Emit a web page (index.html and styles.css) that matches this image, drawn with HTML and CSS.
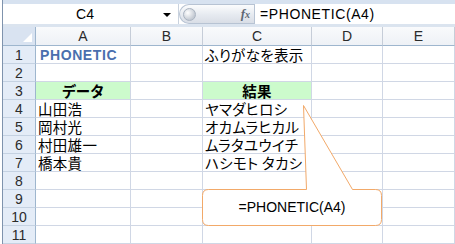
FILE: index.html
```html
<!DOCTYPE html>
<html lang="ja">
<head>
<meta charset="utf-8">
<title>PHONETIC</title>
<link rel="stylesheet" href="styles.css">
</head>
<body>
<div class="app">
  <div class="topstrip"></div>
  <div class="fbar">
    <div class="namebox"><span class="ref">C4</span><span class="dd"></span></div>
    <div class="pill"><span class="knob"></span><span class="fx">f<span class="fxx">x</span></span></div>
    <div class="formula">=PHONETIC(A4)</div>
  </div>
  <div class="band"></div>
  <div class="sheet">
    <div class="corner"><span class="tri"></span></div>
    <div class="colh">A</div><div class="colh">B</div><div class="colh">C</div><div class="colh">D</div><div class="colh">E</div>

    <div class="rowh">1</div><div class="cell title">PHONETIC</div><div class="cell"></div><div class="cell jp">ふりがなを表示</div><div class="cell"></div><div class="cell"></div>
    <div class="rowh">2</div><div class="cell"></div><div class="cell"></div><div class="cell"></div><div class="cell"></div><div class="cell"></div>
    <div class="rowh">3</div><div class="cell jp head">データ</div><div class="cell"></div><div class="cell jp head">結果</div><div class="cell"></div><div class="cell"></div>
    <div class="rowh">4</div><div class="cell jp">山田浩</div><div class="cell"></div><div class="cell jp">ヤマダヒロシ</div><div class="cell"></div><div class="cell"></div>
    <div class="rowh">5</div><div class="cell jp">岡村光</div><div class="cell"></div><div class="cell jp">オカムラヒカル</div><div class="cell"></div><div class="cell"></div>
    <div class="rowh">6</div><div class="cell jp">村田雄一</div><div class="cell"></div><div class="cell jp">ムラタユウイチ</div><div class="cell"></div><div class="cell"></div>
    <div class="rowh">7</div><div class="cell jp">橋本貴</div><div class="cell"></div><div class="cell jp">ハシモト タカシ</div><div class="cell"></div><div class="cell"></div>
    <div class="rowh">8</div><div class="cell"></div><div class="cell"></div><div class="cell"></div><div class="cell"></div><div class="cell"></div>
    <div class="rowh">9</div><div class="cell"></div><div class="cell"></div><div class="cell"></div><div class="cell"></div><div class="cell"></div>
    <div class="rowh">10</div><div class="cell"></div><div class="cell"></div><div class="cell"></div><div class="cell"></div><div class="cell"></div>
    <div class="rowh">11</div><div class="cell"></div><div class="cell"></div><div class="cell"></div><div class="cell"></div><div class="cell"></div>
  </div>
  <div class="callout">
    <svg width="455" height="244" viewBox="0 0 455 244">
      <path d="M208.5 189.5 H306.5 L303.5 105.5 L352.5 189.5 H375.5 Q381.5 189.5 381.5 195.5 V219.5 Q381.5 225.5 375.5 225.5 H208.5 Q202.5 225.5 202.5 219.5 V195.5 Q202.5 189.5 208.5 189.5 Z" fill="#ffffff" stroke="#f2a969" stroke-width="1"/>
    </svg>
    <div class="callout-text">=PHONETIC(A4)</div>
  </div>
</div>
</body>
</html>
```

FILE: styles.css
```css
html, body {
  margin: 0;
  padding: 0;
  background: #ffffff;
  overflow: hidden;
}
body {
  width: 455px;
  height: 244px;
  font-family: "Liberation Sans", Arial, sans-serif;
  color: #000;
}
.app {
  position: relative;
  margin-left: 2px;
  width: 452px;
  height: 244px;
  border-left: 1px solid #7f93ad;
  border-right: 1px solid #9fb3cb;
  background: #ffffff;
}
.topstrip {
  height: 4px;
  background: #d7e2f0;
}
.fbar {
  display: flex;
  height: 20px;
  background: #ffffff;
}
.namebox {
  width: 175px;
  display: flex;
  align-items: center;
  border-right: 1px solid #c9d2de;
}
.ref {
  flex: 1;
  text-align: center;
  font-size: 14px;
  padding-left: 4px;
}
.dd {
  width: 0;
  height: 0;
  border-left: 4px solid transparent;
  border-right: 4px solid transparent;
  border-top: 4px solid #000;
  margin-right: 7px;
  margin-top: 1px;
}
.pill {
  width: 75px;
  display: flex;
  align-items: center;
  justify-content: space-between;
  box-sizing: border-box;
  border: 1px solid #b7c3d3;
  border-right: none;
  border-radius: 10px 0 0 10px;
  background: linear-gradient(#fbfcfd, #e6eaf0 55%, #d9dee6);
  padding: 0 4px 0 3px;
}
.knob {
  width: 11px;
  height: 11px;
  border-radius: 50%;
  border: 1px solid #a9b3c0;
  background: radial-gradient(circle at 35% 35%, #ffffff, #c4cad3 70%);
}
.fx {
  font-family: "Liberation Serif", serif;
  font-style: italic;
  font-weight: bold;
  font-size: 13px;
  color: #5d6773;
}
.fxx {
  font-size: 10px;
}
.formula {
  flex: 1;
  border-left: 1px solid #b7c3d3;
  font-size: 14px;
  line-height: 20px;
  padding-left: 5px;
  letter-spacing: 0.6px;
}
.band {
  height: 3px;
  background: #dbe4ef;
}
.sheet {
  display: grid;
  grid-template-columns: 33px 95px 72px 109px 71px 72px;
  grid-template-rows: 19px;
  grid-auto-rows: 18px;
}
.corner {
  position: relative;
  box-sizing: border-box;
  background: #d9e3f1;
  border-right: 1px solid #9eb6ce;
  border-bottom: 1px solid #9eb6ce;
}
.tri {
  position: absolute;
  right: 3px;
  bottom: 3px;
  width: 0;
  height: 0;
  border-left: 9px solid transparent;
  border-bottom: 9px solid #ffffff;
}
.colh {
  box-sizing: border-box;
  background: linear-gradient(#f9fafc, #eef1f6);
  border-right: 1px solid #c6cdd8;
  border-bottom: 1px solid #9eb6ce;
  text-align: center;
  font-size: 14px;
  line-height: 18px;
  color: #2b2b2b;
}
.rowh {
  box-sizing: border-box;
  background: #e4ecf7;
  border-right: 1px solid #9eb6ce;
  border-bottom: 1px solid #c5d2e2;
  text-align: center;
  font-size: 14px;
  line-height: 18px;
  color: #2b2b2b;
}
.cell {
  box-sizing: border-box;
  border-right: 1px solid #d0d7e5;
  border-bottom: 1px solid #d0d7e5;
  padding-left: 2px;
  font-size: 14px;
  line-height: 18px;
  white-space: nowrap;
}
.jp {
  font-family: "Noto Sans CJK JP", sans-serif;
  font-size: 14.5px;
  line-height: 17px;
  font-feature-settings: "palt";
  letter-spacing: 0.3px;
}
.title {
  font-family: "Liberation Sans", Arial, sans-serif;
  font-weight: bold;
  color: #4a6fae;
  letter-spacing: 0.6px;
  padding-left: 4px;
}
.head {
  background: #ccfbcc;
  text-align: center;
  font-weight: bold;
  padding-left: 0;
}
.callout {
  position: absolute;
  left: -3px;
  top: 0;
  width: 455px;
  height: 244px;
  pointer-events: none;
}
.callout svg {
  position: absolute;
  left: 0;
  top: 0;
}
.callout-text {
  position: absolute;
  left: 203px;
  top: 190px;
  width: 178px;
  height: 35px;
  line-height: 35px;
  text-align: center;
  font-family: "Liberation Sans", Arial, sans-serif;
  font-size: 14px;
  color: #000;
}
```
